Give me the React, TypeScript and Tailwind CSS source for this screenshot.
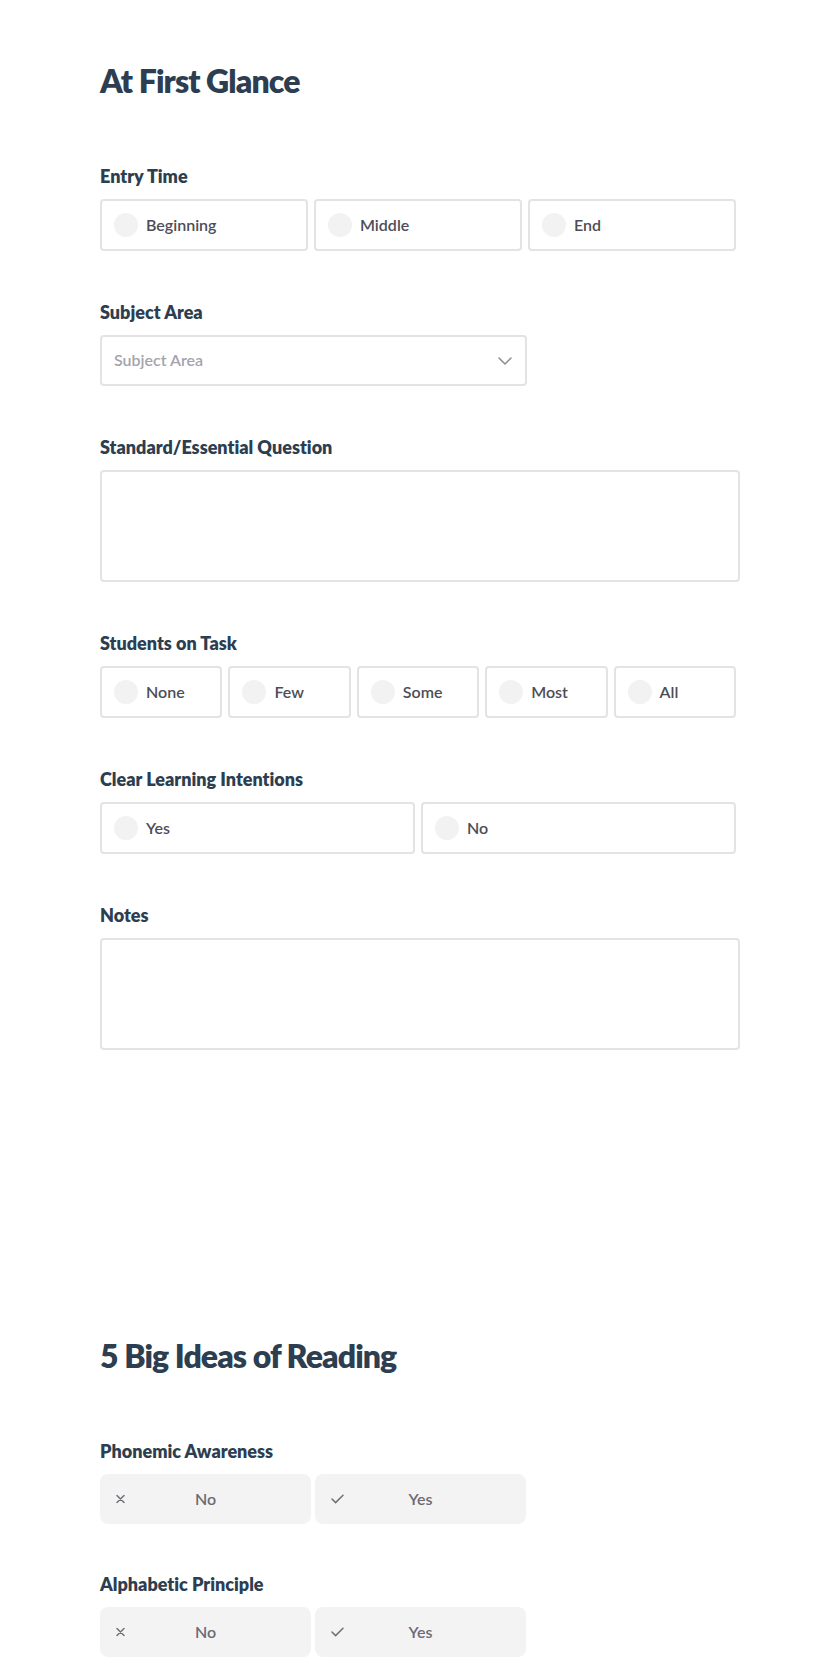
import type { ReactNode } from "react"

const labelCls = "block text-[18px] leading-[24px] font-extrabold text-[#2c3e50]"
const titleCls = "text-[32px] leading-[40px] font-extrabold tracking-[-0.9px] text-[#2c3e50]"

function Section({ label, first, children }: { label: string; first?: boolean; children: ReactNode }) {
  return (
    <div className={first ? "mt-[63px]" : "mt-[49px]"}>
      <div className={labelCls}>{label}</div>
      <div className="mt-[11px]">{children}</div>
    </div>
  )
}

function RadioRow({ options, cols }: { options: string[]; cols: string }) {
  return (
    <div className={`grid ${cols} gap-[6px] w-[636px]`}>
      {options.map((opt) => (
        <label
          key={opt}
          className="flex h-[52px] items-center gap-[8px] rounded-[4px] border-2 border-[#e3e3e3] bg-white pl-[12px]"
        >
          <span className="h-[24px] w-[24px] shrink-0 rounded-full bg-[#f2f2f3]" />
          <span className="-mt-[1px] text-[16px] font-semibold text-[#4d4d57]">{opt}</span>
        </label>
      ))}
    </div>
  )
}

function TextBox() {
  return <div className="h-[112px] w-[640px] rounded-[4px] border-2 border-[#e3e3e3] bg-white" />
}

function YesNo() {
  return (
    <div className="grid w-[426px] grid-cols-2 gap-[4px]">
      <button className="relative flex h-[50px] items-center justify-center rounded-[8px] bg-[#f3f3f3]">
        <svg className="absolute left-[16px] top-1/2 -translate-y-1/2" width="9" height="9" viewBox="0 0 9 9">
          <path d="M1 1L8 8M8 1L1 8" stroke="#707078" strokeWidth="1.5" strokeLinecap="round" />
        </svg>
        <span className="text-[16px] font-semibold text-[#6b6b73]">No</span>
      </button>
      <button className="relative flex h-[50px] items-center justify-center rounded-[8px] bg-[#f3f3f3]">
        <svg className="absolute left-[16px] top-1/2 -translate-y-1/2" width="13" height="10" viewBox="0 0 13 10">
          <path d="M1 5L4.6 8.6L12 1.2" stroke="#707078" strokeWidth="1.5" fill="none" strokeLinecap="round" strokeLinejoin="round" />
        </svg>
        <span className="text-[16px] font-semibold text-[#6b6b73]">Yes</span>
      </button>
    </div>
  )
}

export default function App() {
  return (
    <div className="min-h-screen bg-white pb-[24px] pl-[100px] pt-[61px] font-['Lato','Noto_Sans',sans-serif] [font-variant-ligatures:none]">
      <h1 className={titleCls}>At First Glance</h1>

      <Section label="Entry Time" first>
        <RadioRow options={["Beginning", "Middle", "End"]} cols="grid-cols-3" />
      </Section>

      <Section label="Subject Area">
        <div className="flex h-[51px] w-[427px] items-center justify-between rounded-[4px] border-2 border-[#e3e3e3] bg-white pl-[12px] pr-[13px]">
          <span className="-mt-[2px] text-[16px] font-semibold text-[#a4a4ac]">Subject Area</span>
          <svg width="14" height="8" viewBox="0 0 14 8">
            <path d="M1 1L7 7L13 1" stroke="#8c8c92" strokeWidth="1.5" fill="none" strokeLinecap="round" strokeLinejoin="round" />
          </svg>
        </div>
      </Section>

      <Section label="Standard/Essential Question">
        <TextBox />
      </Section>

      <Section label="Students on Task">
        <RadioRow options={["None", "Few", "Some", "Most", "All"]} cols="grid-cols-5" />
      </Section>

      <Section label="Clear Learning Intentions">
        <RadioRow options={["Yes", "No"]} cols="grid-cols-2" />
      </Section>

      <Section label="Notes">
        <TextBox />
      </Section>

      <h1 className={`${titleCls} mt-[286px]`}>5 Big Ideas of Reading</h1>

      <Section label="Phonemic Awareness" first>
        <YesNo />
      </Section>

      <div className="mt-[48px]">
        <div className={labelCls}>Alphabetic Principle</div>
        <div className="mt-[11px]">
          <YesNo />
        </div>
      </div>
    </div>
  )
}
